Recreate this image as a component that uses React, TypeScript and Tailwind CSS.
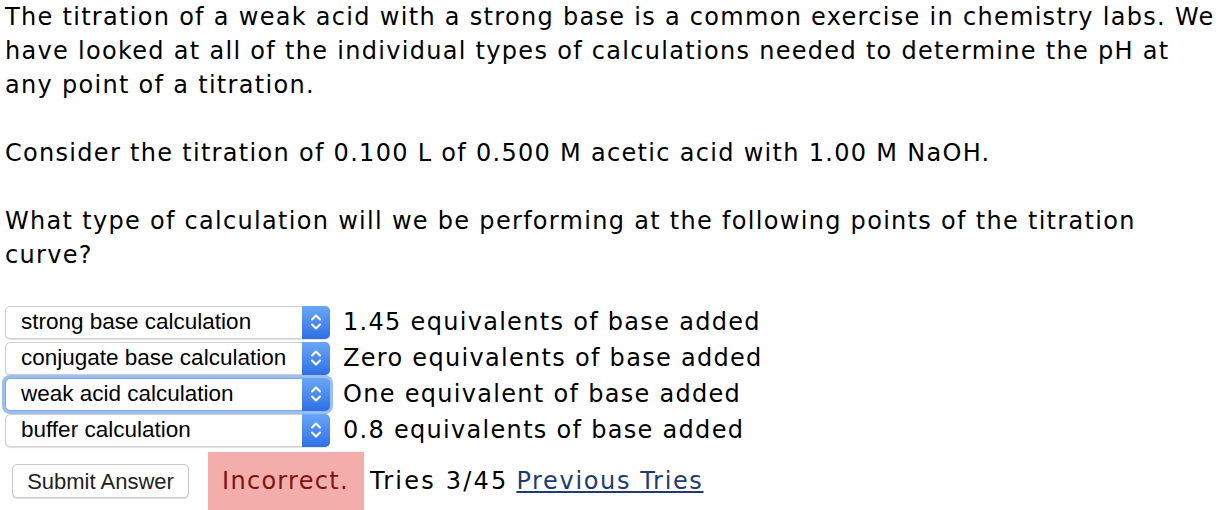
import React from "react";

const rows = [
  { sel: "strong base calculation", label: "1.45 equivalents of base added", focus: false },
  { sel: "conjugate base calculation", label: "Zero equivalents of base added", focus: false },
  { sel: "weak acid calculation", label: "One equivalent of base added", focus: true },
  { sel: "buffer calculation", label: "0.8 equivalents of base added", focus: false },
];

function Chevrons() {
  return (
    <svg width="14" height="22" viewBox="0 0 14 22" fill="none">
      <path d="M3 8.5 L7 4.5 L11 8.5" stroke="white" strokeWidth="2" strokeLinecap="round" strokeLinejoin="round" />
      <path d="M3 13.5 L7 17.5 L11 13.5" stroke="white" strokeWidth="2" strokeLinecap="round" strokeLinejoin="round" />
    </svg>
  );
}

function Select({ text, focus }: { text: string; focus: boolean }) {
  return (
    <div
      className={
        "flex h-[33px] w-[325px] items-stretch rounded-[5px] border bg-white shadow-[0_1px_1px_rgba(0,0,0,0.12)] " +
        (focus ? "border-[#7ea6e6] ring-[3px] ring-[#9cbff3]" : "border-[#cfcfcf]")
      }
    >
      <div className="flex flex-1 items-center pl-[15px] text-[22.5px] text-black" style={{ fontFamily: '"Liberation Sans", Arial, sans-serif' }}>
        {text}
      </div>
      <div className="-my-px -mr-px flex w-[28px] items-center justify-center rounded-r-[5px] bg-gradient-to-b from-[#6aa6f7] to-[#2e6fe6]">
        <Chevrons />
      </div>
    </div>
  );
}

export default function App() {
  return (
    <div className="bg-white px-[5px] text-black tracking-[1.3px]" style={{ fontFamily: '"DejaVu Sans", Verdana, sans-serif' }}>
      <div className="text-[24px] leading-[34px]">
        The titration of a weak acid with a strong base is a common exercise in chemistry labs. We have looked at all of the
        individual types of calculations needed to determine the pH at any point of a titration.
        <br />
        <br />
        Consider the titration of 0.100 L of 0.500 M acetic acid with 1.00 M NaOH.
        <br />
        <br />
        What type of calculation will we be performing at the following points of the titration curve?
      </div>
      <div className="mt-[33px] flex flex-col gap-[2px] tracking-normal">
        {rows.map((r) => (
          <div key={r.sel} className="flex items-center gap-[13px]">
            <Select text={r.sel} focus={r.focus} />
            <span className="text-[24px] leading-[34px] tracking-[1.3px]">{r.label}</span>
          </div>
        ))}
      </div>
      <div className="mt-[5px] flex items-center">
        <button
          className="ml-[7px] h-[34px] w-[177px] rounded-[5px] border border-[#c8c8c8] bg-white text-[22px] tracking-normal text-[#222] shadow-[0_1px_1px_rgba(0,0,0,0.15)]"
          style={{ fontFamily: '"Liberation Sans", Arial, sans-serif' }}
        >
          Submit Answer
        </button>
        <div className="ml-[19px] flex h-[58px] items-center bg-[#f3adaa] pl-[14px] pr-[15px] text-[24px] text-[#7d1414]">Incorrect.</div>
        <span className="ml-[6px] text-[24px] tracking-[2.2px]">Tries 3/45</span>
        <a className="ml-[8px] text-[24px] tracking-[1.65px] text-[#1d3c72] underline">Previous Tries</a>
      </div>
    </div>
  );
}
